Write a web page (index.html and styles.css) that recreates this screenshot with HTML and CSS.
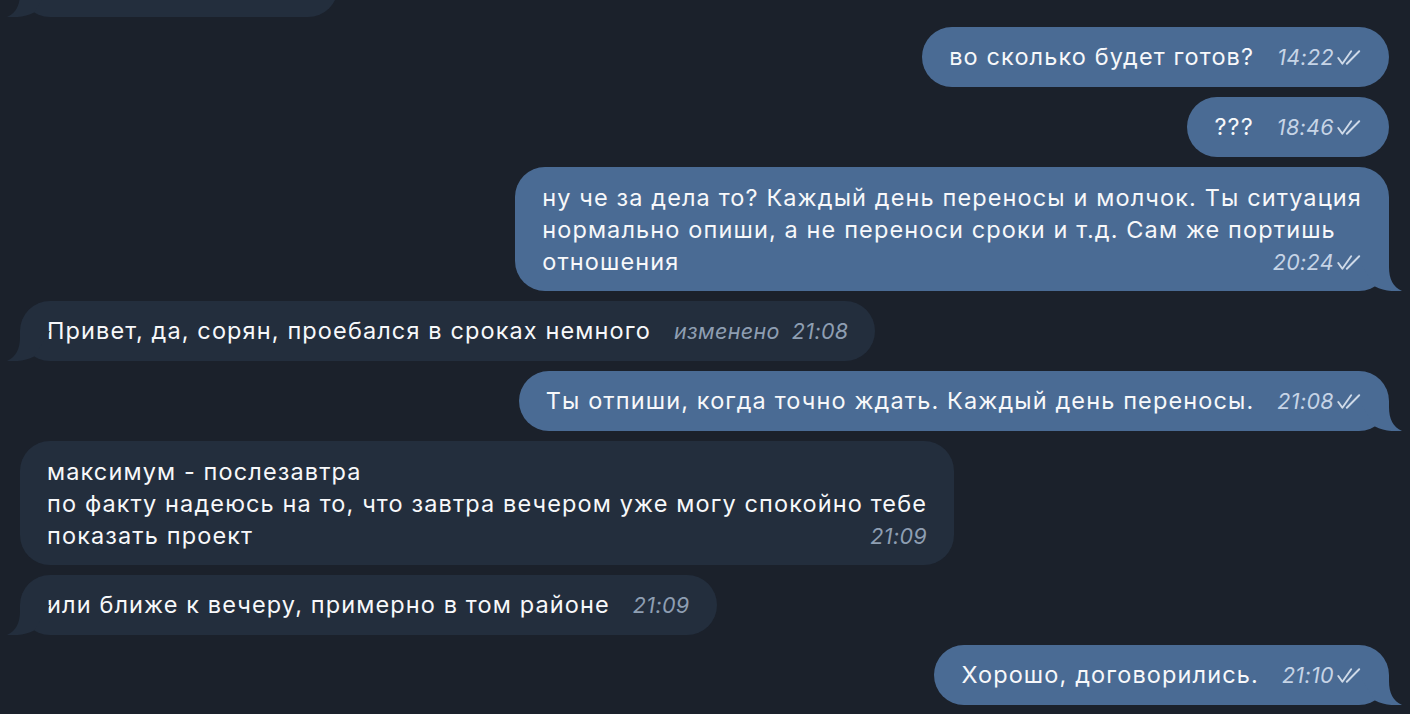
FILE: index.html
```html
<!DOCTYPE html>
<html lang="ru">
<head>
<meta charset="utf-8">
<title>Chat</title>
<link rel="stylesheet" href="styles.css">
</head>
<body>
<div class="chat">
  <div class="row in">
    <div class="bubble in stub">
      <svg class="tail" viewBox="0 0 43 30"><path d="M0,0 L30,0 L30,6 C30,18 34,26 43,30 C35,31 24,29.5 16,25.4 Z"/></svg>
    </div>
  </div>

  <div class="row out">
    <div class="bubble out">
      <span class="text">во сколько будет готов?</span>
      <span class="meta"><span class="time">14:22</span><svg class="check" viewBox="0 0 24 14"><path d="M2,7.5 L5.8,12.8 L14,1.2 M10,12.8 L21.5,1.2"/></svg></span>
    </div>
  </div>

  <div class="row out">
    <div class="bubble out">
      <span class="text">???</span>
      <span class="meta"><span class="time">18:46</span><svg class="check" viewBox="0 0 24 14"><path d="M2,7.5 L5.8,12.8 L14,1.2 M10,12.8 L21.5,1.2"/></svg></span>
    </div>
  </div>

  <div class="row out">
    <div class="bubble out multi">
      <div class="line">ну че за дела то? Каждый день переносы и молчок. Ты ситуация</div>
      <div class="line">нормально опиши, а не переноси сроки и т.д. Сам же портишь</div>
      <div class="line last">
        <span class="text">отношения</span>
        <span class="meta"><span class="time">20:24</span><svg class="check" viewBox="0 0 24 14"><path d="M2,7.5 L5.8,12.8 L14,1.2 M10,12.8 L21.5,1.2"/></svg></span>
      </div>
      <svg class="tail" viewBox="0 0 43 30"><path d="M0,0 L30,0 L30,6 C30,18 34,26 43,30 C35,31 24,29.5 16,25.4 Z"/></svg>
    </div>
  </div>

  <div class="row in">
    <div class="bubble in">
      <span class="text">Привет, да, сорян, проебался в сроках немного</span>
      <span class="meta"><span class="edited">изменено</span><span class="time">21:08</span></span>
      <svg class="tail" viewBox="0 0 43 30"><path d="M0,0 L30,0 L30,6 C30,18 34,26 43,30 C35,31 24,29.5 16,25.4 Z"/></svg>
    </div>
  </div>

  <div class="row out">
    <div class="bubble out">
      <span class="text">Ты отпиши, когда точно ждать. Каждый день переносы.</span>
      <span class="meta"><span class="time">21:08</span><svg class="check" viewBox="0 0 24 14"><path d="M2,7.5 L5.8,12.8 L14,1.2 M10,12.8 L21.5,1.2"/></svg></span>
      <svg class="tail" viewBox="0 0 43 30"><path d="M0,0 L30,0 L30,6 C30,18 34,26 43,30 C35,31 24,29.5 16,25.4 Z"/></svg>
    </div>
  </div>

  <div class="row in">
    <div class="bubble in multi">
      <div class="line">максимум - послезавтра</div>
      <div class="line">по факту надеюсь на то, что завтра вечером уже могу спокойно тебе</div>
      <div class="line last">
        <span class="text">показать проект</span>
        <span class="meta"><span class="time">21:09</span></span>
      </div>
    </div>
  </div>

  <div class="row in">
    <div class="bubble in">
      <span class="text">или ближе к вечеру, примерно в том районе</span>
      <span class="meta"><span class="time">21:09</span></span>
      <svg class="tail" viewBox="0 0 43 30"><path d="M0,0 L30,0 L30,6 C30,18 34,26 43,30 C35,31 24,29.5 16,25.4 Z"/></svg>
    </div>
  </div>

  <div class="row out">
    <div class="bubble out">
      <span class="text">Хорошо, договорились.</span>
      <span class="meta"><span class="time">21:10</span><svg class="check" viewBox="0 0 24 14"><path d="M2,7.5 L5.8,12.8 L14,1.2 M10,12.8 L21.5,1.2"/></svg></span>
      <svg class="tail" viewBox="0 0 43 30"><path d="M0,0 L30,0 L30,6 C30,18 34,26 43,30 C35,31 24,29.5 16,25.4 Z"/></svg>
    </div>
  </div>
</div>
</body>
</html>
```

FILE: styles.css
```css
html, body {
  margin: 0;
  padding: 0;
  height: 100%;
  overflow: hidden;
  background: #1b212b;
}

.chat {
  display: flex;
  flex-direction: column;
  gap: 10px;
  padding: 0 21px 0 20px;
  font-family: Inter, "Noto Sans", sans-serif;
  font-size: 23.5px;
  letter-spacing: 1.12px;
  line-height: 32px;
  color: #f7f8fa;
}

.row {
  display: flex;
}

.row.out {
  justify-content: flex-end;
}

.row.in {
  justify-content: flex-start;
}

.bubble {
  position: relative;
  display: flex;
  align-items: baseline;
  padding: 14px 27px 14px 27px;
  border-radius: 30px;
  white-space: nowrap;
}

.bubble.out {
  background: #4a6b94;
}

.bubble.in {
  background: #232e3d;
}

.bubble.stub {
  width: 318px;
  height: 60px;
  box-sizing: border-box;
  margin-top: -43px;
}

.bubble.multi {
  display: block;
  padding-top: 15px;
  padding-bottom: 13px;
}

.line {
  height: 32px;
}

.line.last {
  display: flex;
  align-items: baseline;
  justify-content: space-between;
}

.text {
  line-height: 32px;
}

.meta {
  display: inline-flex;
  align-items: baseline;
  margin-left: 23px;
  font-style: italic;
  font-size: 21.5px;
  letter-spacing: 0.35px;
  line-height: 20px;
}

.bubble.out .meta {
  color: #c6d4e6;
}

.bubble.in .meta {
  color: #8e9eb2;
}

.edited {
  margin-right: 12px;
}

.check {
  width: 26px;
  height: 15px;
  margin-left: 2px;
  fill: none;
  stroke: #cfdae8;
  stroke-width: 1.8;
  stroke-linecap: round;
  stroke-linejoin: round;
}

.tail {
  position: absolute;
  bottom: 0;
  width: 43px;
  height: 30px;
}

.bubble.out .tail {
  right: -13px;
  fill: #4a6b94;
}

.bubble.in .tail {
  left: -13px;
  fill: #232e3d;
  transform: scaleX(-1);
}
```
